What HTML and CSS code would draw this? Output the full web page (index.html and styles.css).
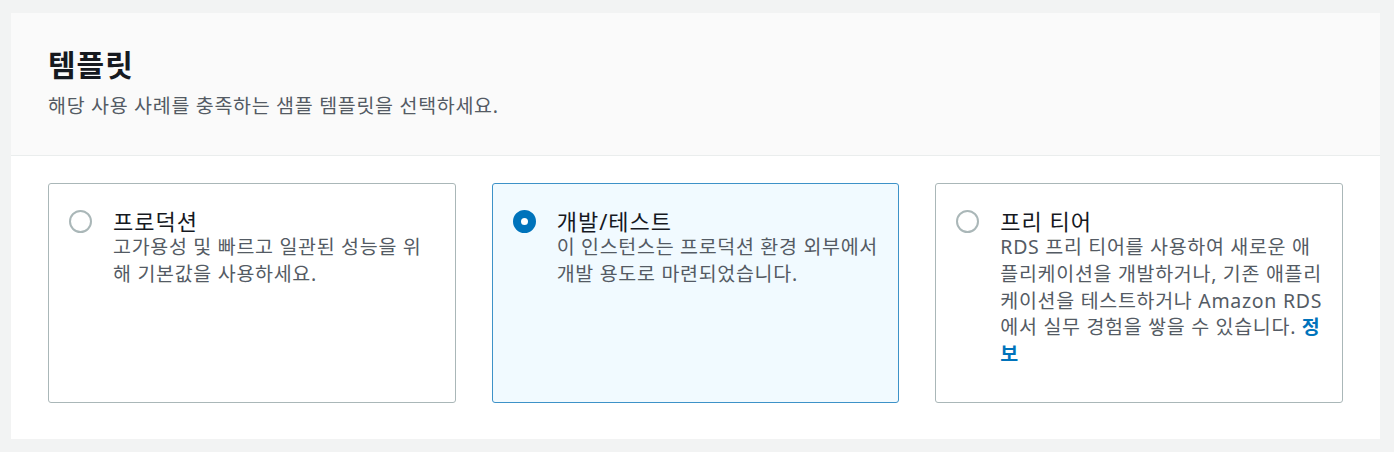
FILE: index.html
```html
<!DOCTYPE html>
<html lang="ko">
<head>
    <meta charset="UTF-8">
    <meta name="viewport" content="width=device-width, initial-scale=1.0">
    <title>템플릿</title>
    <link rel="stylesheet" href="styles.css">
</head>
<body>
    <div class="panel">
        <div class="panel-header">
            <h2>템플릿</h2>
            <p>해당 사용 사례를 충족하는 샘플 템플릿을 선택하세요.</p>
        </div>
        <div class="panel-body">
            <!-- template tiles -->
            <label class="tile">
                <span class="radio"></span>
                <span class="tile-text">
                    <span class="tile-title">프로덕션</span>
                    <span class="tile-desc">고가용성 및 빠르고 일관된 성능을 위해 기본값을 사용하세요.</span>
                </span>
            </label>
            <label class="tile selected">
                <span class="radio"></span>
                <span class="tile-text">
                    <span class="tile-title">개발/테스트</span>
                    <span class="tile-desc">이 인스턴스는 프로덕션 환경 외부에서 개발 용도로 마련되었습니다.</span>
                </span>
            </label>
            <label class="tile">
                <span class="radio"></span>
                <span class="tile-text">
                    <span class="tile-title">프리 티어</span>
                    <span class="tile-desc">RDS 프리 티어를 사용하여 새로운 애플리케이션을 개발하거나, 기존 애플리케이션을 테스트하거나 Amazon RDS에서 실무 경험을 쌓을 수 있습니다. <a href="#" class="info">정보</a></span>
                </span>
            </label>
        </div>
    </div>
</body>
</html>
```

FILE: styles.css
```css
body {
    margin: 13px 14px 0 11px;
    background-color: #f2f3f3;
    font-family: "Noto Sans", "Noto Sans CJK KR", sans-serif;
    color: #16191f;
}
.panel {
    background-color: #fff;
    box-shadow: 0 1px 1px 0 rgba(0, 28, 36, 0.3), 1px 1px 1px 0 rgba(0, 28, 36, 0.15), -1px 1px 1px 0 rgba(0, 28, 36, 0.15);
}
.panel-header {
    background-color: #fafafa;
    border-bottom: 1px solid #eaeded;
    padding: 32px 37px 35px;
}
.panel-header h2 {
    margin: 0;
    font-size: 30px;
    line-height: 40px;
    font-weight: 700;
    letter-spacing: 1px;
}
.panel-header p {
    margin: 8px 0 0;
    font-size: 19.5px;
    line-height: 26.67px;
    letter-spacing: 0.7px;
    color: #545b64;
}
.panel-body {
    display: grid;
    grid-template-columns: repeat(3, 1fr);
    gap: 36px;
    padding: 27px 37px 36px;
}
.tile {
    display: flex;
    gap: 21px;
    padding: 24px 19px 34px 20px;
    border: 1px solid #aab7b8;
    border-radius: 3px;
}
.tile.selected {
    border-color: #3d92c8;
    background-color: #f1faff;
}
.radio {
    flex: none;
    width: 23px;
    height: 23px;
    margin-top: 2px;
    box-sizing: border-box;
    border: 2px solid #aab7b8;
    border-radius: 50%;
    background-color: #fff;
}
.selected .radio {
    border: 8px solid #0073bb;
}
.tile-text {
    display: flex;
    flex-direction: column;
}
.tile-title {
    font-size: 22px;
    line-height: 26.67px;
    letter-spacing: 1px;
}
.tile-desc {
    font-size: 19.5px;
    line-height: 26.67px;
    letter-spacing: 0.7px;
    color: #545b64;
}
.info {
    color: #0073bb;
    font-weight: 700;
    text-decoration: none;
}
```
